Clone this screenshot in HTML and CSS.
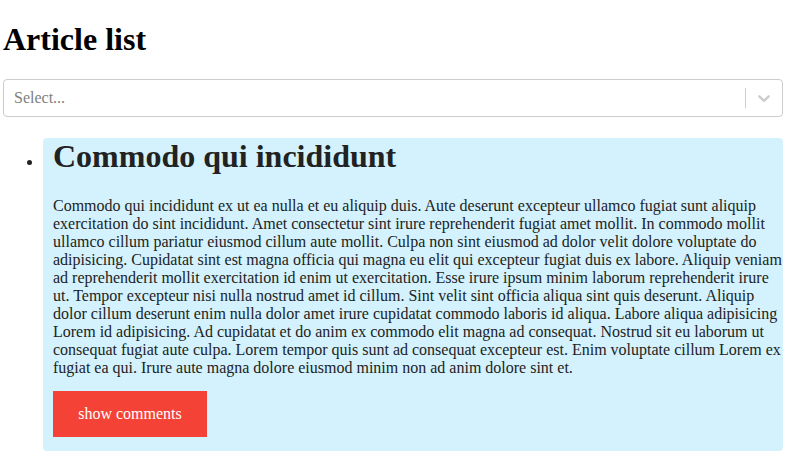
FILE: index.html
```html
<!DOCTYPE html>
<html>
<head>
<meta charset="utf-8">
<link rel="stylesheet" href="styles.css">
</head>
<body>
<div class="app">
  <h1 class="page-title">Article list</h1>
  <div class="select">
    <div class="select-value">Select...</div>
    <div class="select-indicators">
      <span class="select-sep"></span>
      <span class="select-arrow">
        <svg width="20" height="20" viewBox="0 0 20 20"><path fill="#cccccc" d="M4.516 7.548c0.436-0.446 1.043-0.481 1.576 0l3.908 3.747 3.908-3.747c0.533-0.481 1.141-0.446 1.574 0 0.436 0.445 0.408 1.197 0 1.615-0.406 0.418-4.695 4.502-4.695 4.502-0.217 0.223-0.502 0.335-0.787 0.335s-0.57-0.112-0.789-0.335c0 0-4.287-4.084-4.695-4.502s-0.436-1.170 0-1.615z"/></svg>
      </span>
    </div>
  </div>
  <ul class="articles">
    <li class="article">
      <h1 class="article-title">Commodo qui incididunt</h1>
      <p class="article-body">Commodo qui incididunt ex ut ea nulla et eu aliquip duis. Aute deserunt excepteur ullamco fugiat sunt aliquip exercitation do sint incididunt. Amet consectetur sint irure reprehenderit fugiat amet mollit. In commodo mollit ullamco cillum pariatur eiusmod cillum aute mollit. Culpa non sint eiusmod ad dolor velit dolore voluptate do adipisicing. Cupidatat sint est magna officia qui magna eu elit qui excepteur fugiat duis ex labore. Aliquip veniam ad reprehenderit mollit exercitation id enim ut exercitation. Esse irure ipsum minim laborum reprehenderit irure ut. Tempor excepteur nisi nulla nostrud amet id cillum. Sint velit sint officia aliqua sint quis deserunt. Aliquip dolor cillum deserunt enim nulla dolor amet irure cupidatat commodo laboris id aliqua. Labore aliqua adipisicing Lorem id adipisicing. Ad cupidatat et do anim ex commodo elit magna ad consequat. Nostrud sit eu laborum ut consequat fugiat aute culpa. Lorem tempor quis sunt ad consequat excepteur est. Enim voluptate cillum Lorem ex fugiat ea qui. Irure aute magna dolore eiusmod minim non ad anim dolore sint et.</p>
      <button class="btn">show comments</button>
    </li>
  </ul>
</div>
</body>
</html>
```

FILE: styles.css
```css
html, body {
  margin: 0;
  padding: 0;
  background: #ffffff;
}

body {
  font-family: "Liberation Serif", "Times New Roman", serif;
  font-size: 16px;
  color: #000;
}

.app {
  padding: 0 2px 0 3px;
}

.page-title {
  font-size: 32px;
  font-weight: bold;
  margin: 20.5px 0 21.44px 0;
  line-height: normal;
}

.select {
  display: flex;
  align-items: center;
  justify-content: space-between;
  min-height: 38px;
  box-sizing: border-box;
  border: 1px solid #cccccc;
  border-radius: 4px;
  background: #fff;
}

.select-value {
  flex: 1;
  padding: 2px 8px;
  margin-left: 2px;
  color: #808080;
  font-size: 16px;
}

.select-indicators {
  display: flex;
  align-items: stretch;
  align-self: stretch;
}

.select-sep {
  width: 1px;
  background: #cccccc;
  margin: 8px 0;
}

.select-arrow {
  display: flex;
  align-items: center;
  padding: 8px;
}

.select-arrow svg {
  display: block;
}

.articles {
  margin: 16px 0;
  padding-left: 40px;
}

.article {
  background: #d3f2fd;
  border-radius: 4px;
  padding: 0 1px 14px 10px;
  color: #222;
}

.article-title {
  font-size: 32px;
  font-weight: bold;
  margin: 21.44px 0;
  color: #222;
}

.article-body {
  margin: 16px 0 14px;
}

.btn {
  display: inline-block;
  background: #f44336;
  color: #fff;
  border: none;
  font-family: "Liberation Serif", "Times New Roman", serif;
  font-size: 16px;
  padding: 0;
  width: 154px;
  height: 46px;
  cursor: pointer;
}
```
